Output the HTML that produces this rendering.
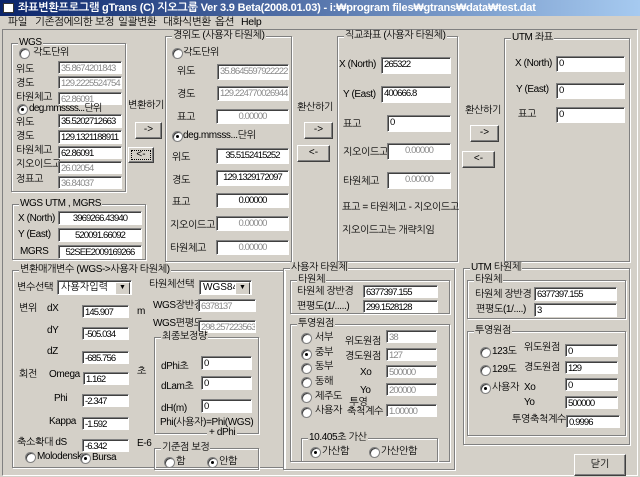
<!DOCTYPE html><html><head><meta charset="utf-8"><style>
*{margin:0;padding:0;box-sizing:border-box}
body{width:640px;height:477px;background:#d4d0c8;position:relative;overflow:hidden;font-family:"Liberation Sans","NanumGothic","Noto Sans CJK KR",sans-serif;font-size:10px;color:#000}
.l{position:absolute;white-space:nowrap;font-size:10px;line-height:12px;letter-spacing:-0.4px}
.i{position:absolute;background:#fff;border:1px solid;border-color:#808080 #fff #fff #808080;box-shadow:inset 1px 1px #404040;font-size:9.5px;line-height:11px;padding:1px 0 0 2px;overflow:hidden;white-space:nowrap;letter-spacing:-0.9px}
.d{color:#8a8a8a}
.c{text-align:center;padding-left:0}
.g{position:absolute;border:1px solid #808080;box-shadow:1px 1px #fff,inset 1px 1px #fff}
.g>.t{position:absolute;top:-7px;left:6px;background:#d4d0c8;padding:0 1px;white-space:nowrap;line-height:12px;letter-spacing:-0.4px}
.b{position:absolute;background:#d4d0c8;border:1px solid;border-color:#fff #404040 #404040 #fff;box-shadow:inset -1px -1px #808080;text-align:center;font-size:10px}
.r{position:absolute;width:11px;height:11px;border-radius:50%;background:#fff;border:1px solid #808080;box-shadow:inset 1px 1px #404040}
.r.on::after{content:"";position:absolute;left:3px;top:3px;width:3px;height:3px;border-radius:50%;background:#000}
.s{position:absolute;background:#fff;border:1px solid;border-color:#808080 #fff #fff #808080;box-shadow:inset 1px 1px #404040;font-size:10px;line-height:13px;padding-left:3px;white-space:nowrap;overflow:hidden}
.s::after{content:"▼";position:absolute;right:1px;top:1px;width:13px;height:11px;background:#d4d0c8;border:1px solid;border-color:#fff #404040 #404040 #fff;font-size:7px;line-height:9px;text-align:center}
.m{position:absolute;top:16px;line-height:13px;font-size:10.5px;white-space:nowrap;letter-spacing:-0.3px}
</style></head><body>
<div style="position:absolute;left:0;top:0;width:640px;height:16px;background:linear-gradient(90deg,#0a246a,#a6caf0);color:#fff;font-weight:bold;font-size:11px;line-height:16px;padding-left:18px;white-space:nowrap;letter-spacing:-0.2px">좌표변환프로그램 gTrans (C) 지오그룹 Ver 3.9 Beta(2008.01.03) - i:₩program files₩gtrans₩data₩test.dat</div>
<div style="position:absolute;left:3px;top:3px;width:11px;height:10px;background:#fff;border:1px solid #333"></div>
<div class="m" style="left:8px">파일</div>
<div class="m" style="left:35px">기존점에의한 보정</div>
<div class="m" style="left:118px">일괄변환</div>
<div class="m" style="left:163px">대화식변환</div>
<div class="m" style="left:215px">옵션</div>
<div class="m" style="left:241px">Help</div>
<div style="position:absolute;left:2px;top:29px;width:636px;height:447px;border:1px solid;border-color:#808080 #fff #fff #808080"></div>

<!-- WGS -->
<div class="g" style="left:11px;top:43px;width:115px;height:149px"><span class="t">WGS</span></div>
<div class="r" style="left:19px;top:48px"></div><div class="l" style="left:33px;top:47px">각도단위</div>
<div class="l" style="left:16px;top:64px">위도</div><div class="i d" style="left:58px;top:61px;width:64px;height:13px">35.8674201843</div>
<div class="l" style="left:16px;top:78px">경도</div><div class="i d" style="left:58px;top:76px;width:64px;height:13px">129.2225524754</div>
<div class="l" style="left:16px;top:92px">타원체고</div><div class="i d" style="left:58px;top:92px;width:64px;height:13px">62.86091</div>
<div class="r on" style="left:17px;top:104px"></div><div class="l" style="left:29px;top:103px;letter-spacing:-0.7px">deg.mmssss...단위</div>
<div class="l" style="left:16px;top:117px">위도</div><div class="i" style="left:58px;top:114px;width:64px;height:14px">35.5202712663</div>
<div class="l" style="left:16px;top:131px">경도</div><div class="i" style="left:58px;top:130px;width:64px;height:14px">129.1321188911</div>
<div class="l" style="left:16px;top:145px">타원체고</div><div class="i" style="left:58px;top:146px;width:64px;height:13px">62.86091</div>
<div class="l" style="left:16px;top:159px">지오이드고</div><div class="i d" style="left:58px;top:161px;width:64px;height:13px">26.02054</div>
<div class="l" style="left:16px;top:174px">정표고</div><div class="i d" style="left:58px;top:176px;width:64px;height:13px">36.84037</div>

<div class="l" style="left:128px;top:100px">변환하기</div>
<div class="b" style="left:135px;top:122px;width:27px;height:17px;line-height:14px">-&gt;</div>
<div class="b" style="left:128px;top:147px;width:26px;height:16px;line-height:13px;outline:1px dotted #000;outline-offset:-4px">&lt;-</div>

<!-- 경위도 -->
<div class="g" style="left:165px;top:36px;width:127px;height:226px"><span class="t">경위도 (사용자 타원체)</span></div>
<div class="r" style="left:172px;top:48px"></div><div class="l" style="left:183px;top:47px">각도단위</div>
<div class="l" style="left:177px;top:66px">위도</div><div class="i d" style="left:217px;top:64px;width:72px;height:16px">35.8645597922222</div>
<div class="l" style="left:177px;top:89px">경도</div><div class="i d" style="left:217px;top:86px;width:72px;height:15px">129.224770026944</div>
<div class="l" style="left:177px;top:112px">표고</div><div class="i d c" style="left:216px;top:109px;width:73px;height:15px">0.00000</div>
<div class="r on" style="left:172px;top:131px"></div><div class="l" style="left:183px;top:130px">deg.mmsss...단위</div>
<div class="l" style="left:172px;top:152px">위도</div><div class="i c" style="left:216px;top:148px;width:73px;height:16px">35.5152415252</div>
<div class="l" style="left:172px;top:175px">경도</div><div class="i c" style="left:216px;top:170px;width:73px;height:16px">129.1329172097</div>
<div class="l" style="left:172px;top:197px">표고</div><div class="i c" style="left:216px;top:193px;width:73px;height:15px">0.00000</div>
<div class="l" style="left:170px;top:220px">지오이드고</div><div class="i d c" style="left:216px;top:216px;width:73px;height:15px">0.00000</div>
<div class="l" style="left:170px;top:243px">타원체고</div><div class="i d c" style="left:216px;top:240px;width:73px;height:15px">0.00000</div>

<div class="l" style="left:297px;top:102px">환산하기</div>
<div class="b" style="left:304px;top:122px;width:29px;height:17px;line-height:14px">-&gt;</div>
<div class="b" style="left:297px;top:145px;width:33px;height:17px;line-height:14px">&lt;-</div>

<!-- 직교좌표 -->
<div class="g" style="left:337px;top:36px;width:121px;height:226px"><span class="t">직교좌표 (사용자 타원체)</span></div>
<div class="l" style="left:339px;top:59px">X (North)</div><div class="i" style="left:381px;top:57px;width:70px;height:17px">265322</div>
<div class="l" style="left:343px;top:89px">Y (East)</div><div class="i" style="left:381px;top:86px;width:70px;height:17px">400666.8</div>
<div class="l" style="left:343px;top:119px">표고</div><div class="i" style="left:387px;top:115px;width:64px;height:17px">0</div>
<div class="l" style="left:343px;top:147px">지오이드고</div><div class="i d c" style="left:387px;top:143px;width:64px;height:17px">0.00000</div>
<div class="l" style="left:343px;top:176px">타원체고</div><div class="i d c" style="left:387px;top:172px;width:64px;height:17px">0.00000</div>
<div class="l" style="left:342px;top:202px">표고 = 타원체고 - 지오이드고</div>
<div class="l" style="left:342px;top:225px">지오이드고는 개략치임</div>

<div class="l" style="left:465px;top:105px">환산하기</div>
<div class="b" style="left:470px;top:125px;width:29px;height:17px;line-height:14px">-&gt;</div>
<div class="b" style="left:462px;top:151px;width:33px;height:17px;line-height:14px">&lt;-</div>

<!-- UTM 좌표 -->
<div class="g" style="left:504px;top:38px;width:126px;height:224px"><span class="t">UTM 좌표</span></div>
<div class="l" style="left:515px;top:58px">X (North)</div><div class="i" style="left:556px;top:56px;width:69px;height:16px">0</div>
<div class="l" style="left:516px;top:84px">Y (East)</div><div class="i" style="left:556px;top:83px;width:69px;height:16px">0</div>
<div class="l" style="left:518px;top:109px">표고</div><div class="i" style="left:556px;top:107px;width:69px;height:16px">0</div>

<!-- WGS UTM -->
<div class="g" style="left:12px;top:204px;width:134px;height:56px"><span class="t">WGS UTM , MGRS</span></div>
<div class="l" style="left:18px;top:213px">X (North)</div><div class="i c" style="left:58px;top:211px;width:84px;height:14px">3969266.43940</div>
<div class="l" style="left:18px;top:229px">Y (East)</div><div class="i c" style="left:58px;top:228px;width:84px;height:14px">520091.66092</div>
<div class="l" style="left:20px;top:246px">MGRS</div><div class="i c" style="left:58px;top:245px;width:84px;height:14px">52SEE2009169266</div>

<!-- 변환매개변수 -->
<div class="g" style="left:12px;top:270px;width:273px;height:198px"><span class="t">변환매개변수 (WGS-&gt;사용자 타원체)</span></div>
<div class="l" style="left:17px;top:282px">변수선택</div><div class="s" style="left:57px;top:280px;width:75px;height:15px">사용자입력</div>
<div class="l" style="left:149px;top:279px">타원체선택</div><div class="s" style="left:199px;top:280px;width:53px;height:15px">WGS84</div>
<div class="l" style="left:19px;top:303px">변위</div><div class="l" style="left:47px;top:303px">dX</div><div class="i" style="left:82px;top:305px;width:47px;height:13px">145.907</div><div class="l" style="left:137px;top:306px">m</div>
<div class="l" style="left:47px;top:325px">dY</div><div class="i" style="left:82px;top:327px;width:47px;height:13px">-505.034</div>
<div class="l" style="left:47px;top:346px">dZ</div><div class="i" style="left:82px;top:351px;width:47px;height:13px">-685.756</div>
<div class="l" style="left:19px;top:369px">회전</div><div class="l" style="left:49px;top:369px">Omega</div><div class="i" style="left:83px;top:372px;width:46px;height:13px">1.162</div><div class="l" style="left:137px;top:366px">초</div>
<div class="l" style="left:54px;top:393px">Phi</div><div class="i" style="left:82px;top:394px;width:47px;height:13px">-2.347</div>
<div class="l" style="left:49px;top:416px">Kappa</div><div class="i" style="left:82px;top:417px;width:47px;height:13px">-1.592</div>
<div class="l" style="left:17px;top:437px">축소확대 dS</div><div class="i" style="left:82px;top:439px;width:47px;height:13px">-6.342</div><div class="l" style="left:137px;top:438px">E-6</div>
<div class="r" style="left:25px;top:452px"></div><div class="l" style="left:37px;top:451px">Molodensky</div>
<div class="r on" style="left:80px;top:453px"></div><div class="l" style="left:92px;top:452px">Bursa</div>
<div class="l" style="left:153px;top:300px">WGS장반경</div><div class="i d" style="left:198px;top:299px;width:58px;height:13px">6378137</div>
<div class="l" style="left:153px;top:318px">WGS편평도</div><div class="i d" style="left:198px;top:320px;width:58px;height:13px">298.257223563</div>
<div class="g" style="left:154px;top:337px;width:105px;height:97px"><span class="t">최종보정량</span></div>
<div class="l" style="left:161px;top:361px">dPhi초</div><div class="i" style="left:201px;top:356px;width:51px;height:14px">0</div>
<div class="l" style="left:161px;top:381px">dLam초</div><div class="i" style="left:201px;top:376px;width:51px;height:14px">0</div>
<div class="l" style="left:161px;top:403px">dH(m)</div><div class="i" style="left:201px;top:399px;width:51px;height:14px">0</div>
<div class="l" style="left:160px;top:417px">Phi(사용자)=Phi(WGS)</div>
<div class="l" style="left:207px;top:427px;background:#d4d0c8;padding:0 2px">+ dPhi</div>
<div class="g" style="left:154px;top:448px;width:105px;height:22px"><span class="t">기준점 보정</span></div>
<div class="r" style="left:164px;top:457px"></div><div class="l" style="left:176px;top:456px">함</div>
<div class="r on" style="left:207px;top:457px"></div><div class="l" style="left:219px;top:456px">안함</div>

<!-- 사용자 타원체 -->
<div class="g" style="left:283px;top:268px;width:172px;height:202px"><span class="t">사용자 타원체</span></div>
<div class="g" style="left:290px;top:280px;width:160px;height:34px"><span class="t">타원체</span></div>
<div class="l" style="left:297px;top:286px">타원체 장반경</div><div class="i" style="left:363px;top:285px;width:75px;height:13px">6377397.155</div>
<div class="l" style="left:297px;top:301px">편평도(1/.....)</div><div class="i" style="left:363px;top:300px;width:75px;height:13px">299.1528128</div>
<div class="g" style="left:290px;top:324px;width:160px;height:138px"><span class="t">투영원점</span></div>
<div class="r" style="left:301px;top:333px"></div><div class="l" style="left:315px;top:332px">서부</div>
<div class="r on" style="left:301px;top:349px"></div><div class="l" style="left:315px;top:347px">중부</div>
<div class="r" style="left:301px;top:363px"></div><div class="l" style="left:315px;top:361px">동부</div>
<div class="r" style="left:301px;top:377px"></div><div class="l" style="left:315px;top:376px">동해</div>
<div class="r" style="left:301px;top:392px"></div><div class="l" style="left:315px;top:391px">제주도</div>
<div class="r" style="left:301px;top:407px"></div><div class="l" style="left:315px;top:405px">사용자</div>
<div class="l" style="left:345px;top:336px">위도원점</div><div class="i d" style="left:386px;top:330px;width:51px;height:13px">38</div>
<div class="l" style="left:345px;top:351px">경도원점</div><div class="i d" style="left:386px;top:348px;width:51px;height:13px">127</div>
<div class="l" style="left:360px;top:367px">Xo</div><div class="i d" style="left:386px;top:365px;width:51px;height:13px">500000</div>
<div class="l" style="left:360px;top:385px">Yo</div><div class="i d" style="left:386px;top:383px;width:51px;height:13px">200000</div>
<div class="l" style="left:347px;top:398px;line-height:9px">&nbsp;투영<br>축척계수</div><div class="i d" style="left:386px;top:404px;width:51px;height:13px">1.00000</div>
<div class="g" style="left:301px;top:438px;width:137px;height:24px"><span class="t">10.405초 가산</span></div>
<div class="r on" style="left:310px;top:447px"></div><div class="l" style="left:322px;top:446px">가산함</div>
<div class="r" style="left:369px;top:447px"></div><div class="l" style="left:381px;top:446px">가산안함</div>

<!-- UTM 타원체 -->
<div class="g" style="left:463px;top:268px;width:167px;height:177px"><span class="t">UTM 타원체</span></div>
<div class="g" style="left:467px;top:280px;width:159px;height:39px"><span class="t">타원체</span></div>
<div class="l" style="left:475px;top:289px">타원체 장반경</div><div class="i" style="left:534px;top:287px;width:83px;height:14px">6377397.155</div>
<div class="l" style="left:476px;top:304px">편평도(1/....)</div><div class="i" style="left:534px;top:303px;width:83px;height:14px">3</div>
<div class="g" style="left:467px;top:331px;width:159px;height:105px"><span class="t">투영원점</span></div>
<div class="r" style="left:480px;top:347px"></div><div class="l" style="left:492px;top:346px">123도</div>
<div class="r" style="left:480px;top:365px"></div><div class="l" style="left:492px;top:364px">129도</div>
<div class="r on" style="left:480px;top:383px"></div><div class="l" style="left:492px;top:382px">사용자</div>
<div class="l" style="left:524px;top:342px">위도원점</div><div class="i" style="left:565px;top:344px;width:53px;height:13px">0</div>
<div class="l" style="left:524px;top:362px">경도원점</div><div class="i" style="left:565px;top:361px;width:53px;height:13px">129</div>
<div class="l" style="left:524px;top:382px">Xo</div><div class="i" style="left:565px;top:378px;width:53px;height:13px">0</div>
<div class="l" style="left:524px;top:397px">Yo</div><div class="i" style="left:565px;top:396px;width:53px;height:13px">500000</div>
<div class="l" style="left:512px;top:414px">투영축척계수</div><div class="i" style="left:566px;top:415px;width:54px;height:13px">0.9996</div>

<div class="b" style="left:574px;top:454px;width:52px;height:22px;line-height:20px">닫기</div>
</body></html>
